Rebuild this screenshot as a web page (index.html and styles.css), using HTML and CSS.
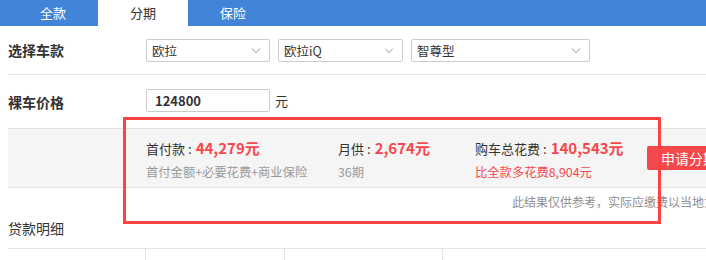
FILE: index.html
```html
<!DOCTYPE html>
<html lang="zh-CN">
<head>
<meta charset="UTF-8">
<title>贷款计算器</title>
<link rel="stylesheet" href="styles.css">
</head>
<body>
<div class="tabs">
  <div class="tab">全款</div>
  <div class="tab active">分期</div>
  <div class="tab">保险</div>
</div>
<div class="calc">
  <div class="row row-car">
    <div class="label">选择车款</div>
    <div class="select s1">欧拉<span class="arrow"></span></div>
    <div class="select s2">欧拉iQ<span class="arrow"></span></div>
    <div class="select s3">智尊型<span class="arrow"></span></div>
  </div>
  <div class="row row-price">
    <div class="label">裸车价格</div>
    <div class="price-input">124800</div>
    <span class="unit">元</span>
  </div>
  <div class="result">
    <div class="item item-first">
      <div class="main">首付款<span class="colon">:</span><b>44,279元</b></div>
      <div class="sub">首付金额+必要花费+商业保险</div>
    </div>
    <div class="item item-month">
      <div class="main">月供<span class="colon">:</span><b>2,674元</b></div>
      <div class="sub">36期</div>
    </div>
    <div class="item item-total">
      <div class="main">购车总花费<span class="colon">:</span><b>140,543元</b></div>
      <div class="sub red">比全款多花费8,904元</div>
    </div>
    <div class="apply">申请分期</div>
  </div>
  <div class="note">此结果仅供参考，实际应缴费以当地为准</div>
  <div class="section-title">贷款明细</div>
  <div class="detail">
    <div class="cell c1"></div>
    <div class="cell c2"></div>
    <div class="cell c3"></div>
    <div class="cell c4"></div>
  </div>
</div>
<div class="mark"></div>
</body>
</html>
```
FILE: styles.css
```css
body {
  margin: 0;
  font-family: "Noto Sans CJK SC", "Noto Sans", sans-serif;
  color: #333;
  background: #fff;
  overflow: hidden;
  width: 706px;
  height: 260px;
  position: relative;
}
.tabs {
  background-color: #4285d8;
  height: 26px;
  display: flex;
  padding-left: 8px;
}
.tab {
  width: 90px;
  line-height: 26px;
  text-align: center;
  font-size: 13px;
  color: #fff;
}
.tab.active {
  background: #fff;
  color: #333;
}
.calc {
  margin-left: 8px;
  width: 742px;
}
.row {
  display: flex;
  align-items: center;
  border-bottom: 1px solid #e3e3e3;
}
.row-car {
  height: 48px;
}
.row-price {
  height: 53px;
}
.label {
  width: 138px;
  font-size: 14px;
  font-weight: bold;
  color: #333;
}
.select {
  position: relative;
  box-sizing: border-box;
  height: 23px;
  line-height: 21px;
  border: 1px solid #ccc;
  border-radius: 2px;
  padding-left: 5px;
  font-size: 12.5px;
  color: #333;
}
.s1 { width: 124px; margin-right: 8px; }
.s2 { width: 125px; margin-right: 8px; }
.s3 { width: 179px; }
.arrow {
  position: absolute;
  right: 10px;
  top: 6px;
  width: 5px;
  height: 5px;
  border-right: 1px solid #bbb;
  border-bottom: 1px solid #bbb;
  transform: rotate(45deg);
}
.price-input {
  box-sizing: border-box;
  width: 124px;
  height: 23px;
  line-height: 21px;
  border: 1px solid #ccc;
  border-radius: 2px;
  padding-left: 8px;
  font-size: 13px;
  font-weight: bold;
  margin-top: -2px;
}
.unit {
  font-size: 13px;
  margin-left: 5px;
  margin-top: -2px;
}
.result {
  display: flex;
  align-items: center;
  box-sizing: border-box;
  height: 59px;
  padding-top: 3px;
  background-color: #f5f5f5;
  border-bottom: 1px solid #e3e3e3;
  padding-left: 138px;
}
.item .main {
  font-size: 13px;
  line-height: 18px;
  color: #333;
}
.item .colon {
  margin: 0 4px 0 3px;
}
.item .main b {
  font-size: 15px;
  color: #f5484d;
}
.item .sub {
  font-size: 12.3px;
  line-height: 18px;
  margin-top: 5px;
  color: #999;
}
.item .sub.red {
  color: #f5484d;
}
.item-first { width: 192px; }
.item-month { width: 137px; }
.item-total { width: 172px; }
.apply {
  width: 84px;
  height: 24px;
  line-height: 24px;
  background-color: #f5484d;
  color: #fff;
  font-size: 14px;
  text-align: center;
  border-radius: 2px;
  margin-top: -4px;
}
.note {
  height: 27px;
  line-height: 27px;
  text-align: right;
  font-size: 12px;
  color: #8f8f8f;
  padding-right: 22px;
}
.section-title {
  line-height: 24px;
  font-size: 14px;
  color: #333;
  margin-top: 1px;
  margin-bottom: 8px;
}
.detail {
  display: flex;
  border-top: 1px solid #e3e3e3;
  height: 20px;
}
.cell {
  border-right: 1px solid #e3e3e3;
}
.c1 { width: 137px; }
.c2 { width: 138px; }
.c3 { width: 157px; }
.c4 { flex: 1; border-right: none; }
.mark {
  position: absolute;
  left: 123px;
  top: 117px;
  width: 532px;
  height: 101px;
  border: 3px solid #ff4343;
}
```
